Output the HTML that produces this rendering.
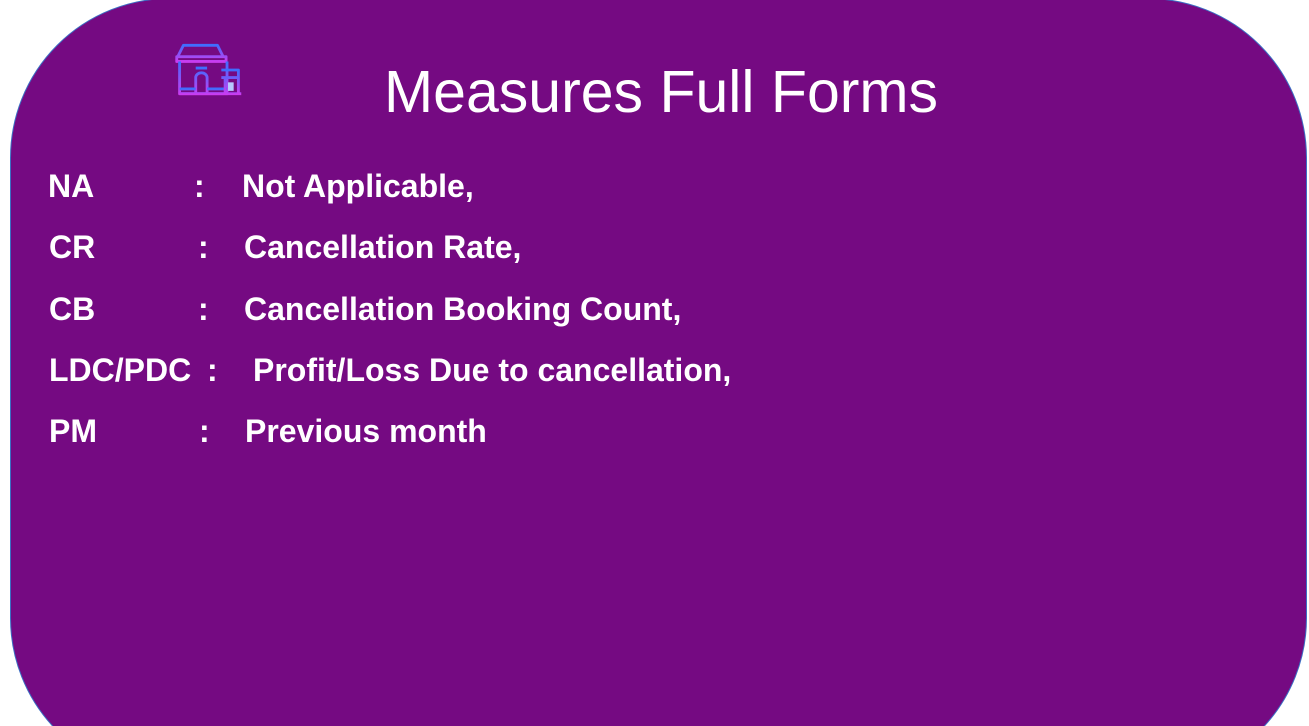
<!DOCTYPE html>
<html><head><style>
html,body{margin:0;width:1309px;height:726px;overflow:hidden}
body{background:#fff;position:relative;font-family:"Liberation Sans",sans-serif}
.wrap{position:absolute;left:0;top:0;width:1309px;height:726px;overflow:hidden}
.card{position:absolute;left:10px;top:-2px;width:1297px;height:780px;background:#750a82;border:1px solid #3b6fc4;border-radius:160px;box-sizing:border-box}
.t{position:absolute;color:#fff;white-space:nowrap}
.r{position:absolute;color:#fff;font-weight:bold;font-size:32px;white-space:nowrap;line-height:1}
</style></head><body>
<div class="wrap">
<div class="card"></div>
<svg style="position:absolute;left:172px;top:40px" width="74" height="60" viewBox="0 0 78 60">
<defs><linearGradient id="g" x1="0" y1="0" x2="0" y2="1"><stop offset="0" stop-color="#3f6dff"/><stop offset="1" stop-color="#c93cf0"/></linearGradient></defs>
<g fill="none" stroke="url(#g)" stroke-width="3" stroke-linejoin="round">
<path d="M12 4h36l6 12H6z M5 16h52v5H5z"/>
<path d="M8 21v34h50V21"/>
<path d="M25 28h12 M25 55V38a6 5 0 0 1 12 0v17"/>
<path d="M8 50h17 M37 50h21 M8 55h65"/>
<path d="M52 30h18v8H52 M56 38v17 M70 38v17"/>
</g>
<rect x="59" y="43" width="6" height="9" fill="#b6c8ff"/>
</svg>
<div class="t" style="left:384px;top:58px;font-size:59px">Measures Full Forms</div>
<div class="r" style="left:48px;top:170px">NA</div><div class="r" style="left:194px;top:170px">:</div><div class="r" style="left:242px;top:170px">Not Applicable,</div>
<div class="r" style="left:49px;top:231px">CR</div><div class="r" style="left:198px;top:231px">:</div><div class="r" style="left:244px;top:231px">Cancellation Rate,</div>
<div class="r" style="left:49px;top:293px">CB</div><div class="r" style="left:198px;top:293px">:</div><div class="r" style="left:244px;top:293px">Cancellation Booking Count,</div>
<div class="r" style="left:49px;top:354px">LDC/PDC</div><div class="r" style="left:207px;top:354px">:</div><div class="r" style="left:253px;top:354px">Profit/Loss Due to cancellation,</div>
<div class="r" style="left:49px;top:415px">PM</div><div class="r" style="left:199px;top:415px">:</div><div class="r" style="left:245px;top:415px">Previous month</div>
</div>
</body></html>
